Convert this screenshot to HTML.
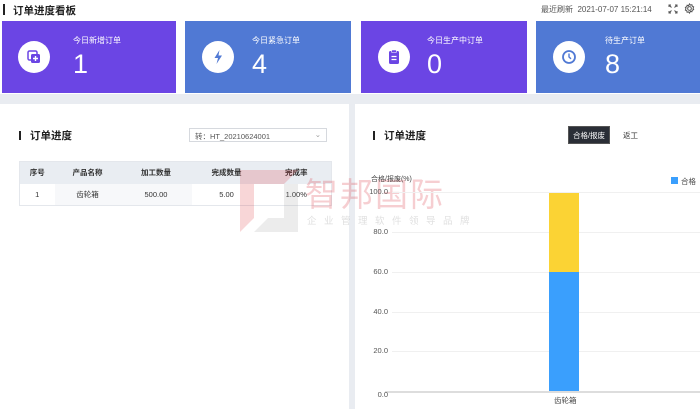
<!DOCTYPE html>
<html><head><meta charset="utf-8"><style>
*{margin:0;padding:0;box-sizing:border-box}
body{width:700px;height:409px;overflow:hidden;background:#e9ecf1;font-family:"Liberation Sans","Noto Sans CJK SC",sans-serif;position:relative;color:#333}
.abs{position:absolute}
.top{left:0;top:0;width:700px;height:94px;background:#fff}
.card{top:21px;height:72px;color:#fff}
.ic{left:16px;top:20px;width:32px;height:32px;border-radius:50%;background:#fff}
.lbl{font-size:8px;top:14px}
.num{font-size:27px;top:28px;font-weight:300}
.panel{background:#fff}
.t{font-size:10.5px;font-weight:bold;color:#222}
table{border-collapse:collapse;font-size:7.5px;color:#333}
td,th{height:22px;text-align:center;font-weight:normal}
th{background:#e9edf2;font-weight:bold}
.y{font-size:7.5px;color:#555;left:20px;width:28px;text-align:right}
.g{left:40px;right:0;height:1px;background:#f0f0f0}
</style></head><body>
<div class="abs top"></div>
<div class="abs" style="left:3px;top:4px;width:1.5px;height:11px;background:#222"></div>
<div class="abs t" style="left:13px;top:3px;font-size:10.5px">订单进度看板</div>
<div class="abs" style="left:541px;top:4px;font-size:8px;color:#555">最近刷新&nbsp;&nbsp;2021-07-07 15:21:14</div>
<svg class="abs" style="left:668px;top:4px" width="10" height="10" viewBox="0 0 10 10" fill="none" stroke="#555" stroke-width="1"><path d="M1 3V1h2M7 1h2v2M9 7v2H7M3 9H1V7M1 1l2.5 2.5M9 1L6.5 3.5M9 9L6.5 6.5M1 9l2.5-2.5"/></svg>
<svg class="abs" style="left:684px;top:3px" width="11" height="11" viewBox="0 0 12 12" fill="none" stroke="#555" stroke-width="1.1"><circle cx="6" cy="6" r="2"/><path d="M6 1l1 1.3 1.6-.4.4 1.6 1.5.7-.6 1.5.6 1.5-1.5.7-.4 1.6-1.6-.4L6 11 5 9.7l-1.6.4L3 8.5 1.5 7.8 2.1 6.3 1.5 4.8 3 4.1l.4-1.6 1.6.4z"/></svg>

<div class="abs card" style="left:2px;width:174px;background:#6b45e4">
 <div class="abs ic"><svg width="32" height="32" viewBox="0 0 32 32"><rect x="10" y="10" width="9" height="9" rx="1.5" fill="none" stroke="#6b45e4" stroke-width="1.5"/><rect x="13" y="13" width="9" height="9" rx="1.5" fill="#6b45e4"/><path d="M17.5 15v5M15 17.5h5" stroke="#fff" stroke-width="1.4"/></svg></div>
 <div class="abs lbl" style="left:71px">今日新增订单</div><div class="abs num" style="left:71px">1</div></div>
<div class="abs card" style="left:185px;width:166px;background:#5079d4">
 <div class="abs ic" style="left:17px"><svg width="32" height="32" viewBox="0 0 32 32"><path d="M17.5 9l-5 8h3.5l-1.5 6 5.5-8.5H16.5z" fill="#5079d4"/></svg></div>
 <div class="abs lbl" style="left:67px">今日紧急订单</div><div class="abs num" style="left:67px">4</div></div>
<div class="abs card" style="left:361px;width:166px;background:#6b45e4">
 <div class="abs ic" style="left:17px"><svg width="32" height="32" viewBox="0 0 32 32"><rect x="11" y="10" width="10" height="13" rx="1.5" fill="#6b45e4"/><rect x="13.5" y="9" width="5" height="2.5" rx="1" fill="#6b45e4" stroke="#fff" stroke-width=".6"/><path d="M13.5 15.5h5M13.5 18.5h5" stroke="#fff" stroke-width="1.2"/></svg></div>
 <div class="abs lbl" style="left:66px">今日生产中订单</div><div class="abs num" style="left:66px">0</div></div>
<div class="abs card" style="left:536px;width:164px;background:#5079d4">
 <div class="abs ic" style="left:17px"><svg width="32" height="32" viewBox="0 0 32 32"><circle cx="16" cy="16" r="6" fill="none" stroke="#5079d4" stroke-width="1.8"/><path d="M16 12.5V16l2 1.8" fill="none" stroke="#5079d4" stroke-width="1.4"/></svg></div>
 <div class="abs lbl" style="left:69px">待生产订单</div><div class="abs num" style="left:69px">8</div></div>

<div class="abs panel" style="left:0;top:104px;width:349px;height:305px"></div>
<div class="abs panel" style="left:355px;top:104px;width:345px;height:305px"></div>

<div class="abs" style="left:19px;top:131px;width:1.5px;height:9px;background:#222"></div>
<div class="abs t" style="left:30px;top:128px">订单进度</div>
<div class="abs" style="left:189px;top:128px;width:138px;height:14px;border:1px solid #d6d9de;font-size:7.5px;color:#555;padding:2px 5px">转：HT_20210624001<span style="position:absolute;right:5px;top:1px;color:#999">⌄</span></div>
<table class="abs" style="left:19px;top:161px;width:313px;border:1px solid #e4e7ec">
<tr><th style="width:35px">序号</th><th style="width:66px">产品名称</th><th style="width:71px">加工数量</th><th style="width:70px">完成数量</th><th>完成率</th></tr>
<tr><td>1</td><td style="background:#f7f8fa">齿轮箱</td><td style="background:#f7f8fa">500.00</td><td>5.00</td><td>1.00%</td></tr>
</table>

<svg class="abs" style="left:240px;top:170px;opacity:.18" width="60" height="62" viewBox="0 0 60 62"><path d="M0 0h58L44 14H14v34L0 62z" fill="#d9222a"/><path d="M58 14v48H14l14-14h16V14z" fill="#999"/></svg>
<div class="abs" style="left:305px;top:168px;font-size:33px;color:rgba(220,60,70,.25);letter-spacing:2px">智邦国际</div>
<div class="abs" style="left:307px;top:213px;font-size:9.5px;color:rgba(150,150,150,.3);letter-spacing:7.5px">企业管理软件领导品牌</div>

<div class="abs" style="left:373px;top:131px;width:1.5px;height:9px;background:#222"></div>
<div class="abs t" style="left:384px;top:128px">订单进度</div>
<div class="abs" style="left:568px;top:126px;width:42px;height:18px;background:#2a2e36;color:#fff;font-size:7.5px;text-align:center;line-height:18px;border:1px solid #555">合格/报废</div>
<div class="abs" style="left:623px;top:130px;font-size:7.5px;color:#333">返工</div>
<div class="abs" style="left:371px;top:174px;font-size:7px;color:#444">合格/报废(%)</div>
<div class="abs" style="left:671px;top:177px;width:7px;height:7px;background:#3a9ffd"></div>
<div class="abs" style="left:681px;top:176px;font-size:7.5px;color:#444">合格</div>
<div class="abs g" style="left:392px;top:192px"></div>
<div class="abs g" style="left:392px;top:232px"></div>
<div class="abs g" style="left:392px;top:272px"></div>
<div class="abs g" style="left:392px;top:312px"></div>
<div class="abs g" style="left:392px;top:351px"></div>
<div class="abs" style="left:385px;top:391px;width:315px;height:1.5px;background:#ddd"></div>
<div class="abs y" style="left:360px;top:187px">100.0</div>
<div class="abs y" style="left:360px;top:227px">80.0</div>
<div class="abs y" style="left:360px;top:267px">60.0</div>
<div class="abs y" style="left:360px;top:307px">40.0</div>
<div class="abs y" style="left:360px;top:346px">20.0</div>
<div class="abs y" style="left:360px;top:390px">0.0</div>
<div class="abs" style="left:549px;top:193px;width:30px;height:79px;background:#fbd334"></div>
<div class="abs" style="left:549px;top:272px;width:30px;height:119px;background:#3a9ffd"></div>
<div class="abs" style="left:554px;top:395px;font-size:7.5px;color:#444">齿轮箱</div>
</body></html>
